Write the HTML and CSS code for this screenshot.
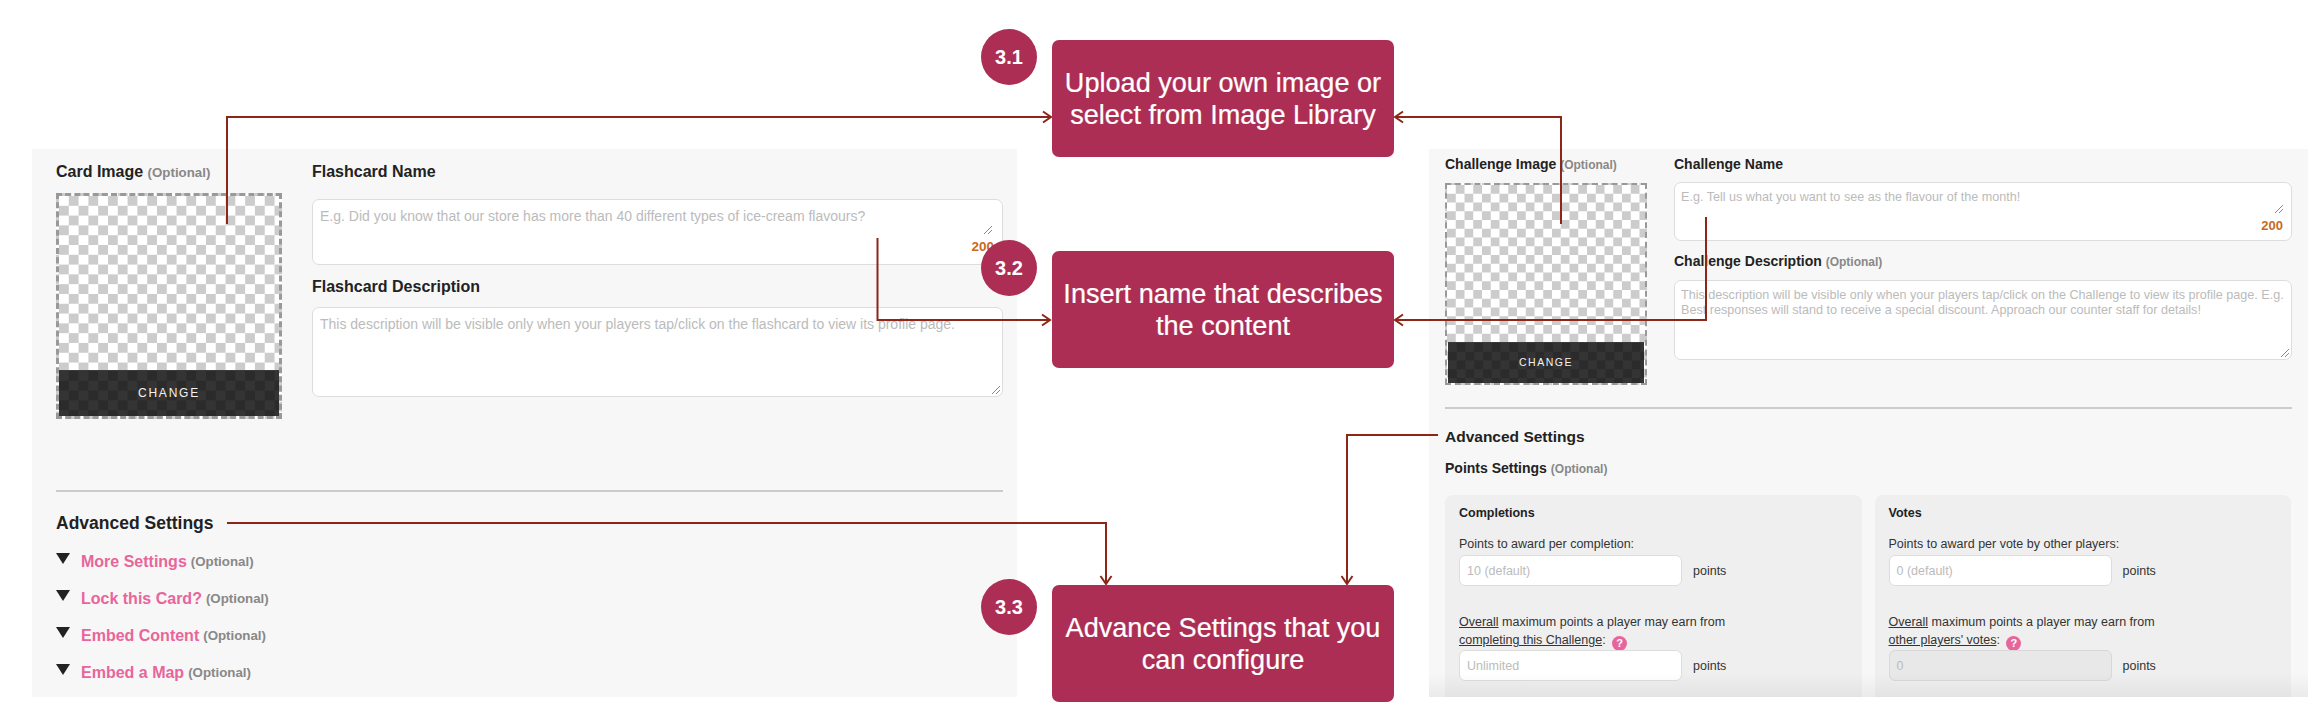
FILE: index.html
```html
<!DOCTYPE html>
<html lang="en">
<head>
<meta charset="utf-8">
<title>Card and Challenge settings guide</title>
<link rel="stylesheet" href="styles.css">
</head>
<body>
<div class="page">
  <section class="panel panel-card">
    <div class="top-row">
      <div class="image-col">
        <div class="label">Card Image <span class="opt">(Optional)</span></div>
        <div class="image-box"><div class="change">CHANGE</div></div>
      </div>
      <div class="fields">
        <div class="label">Flashcard Name</div>
        <div class="box box-name">
          <div class="ph">E.g. Did you know that our store has more than 40 different types of ice-cream flavours?</div>
          <svg class="grip grip-name" width="10" height="10" viewBox="0 0 10 10"><path d="M1 9 9 1M5 9 9 5"/></svg>
          <div class="count">200</div>
        </div>
        <div class="label label-desc">Flashcard Description</div>
        <div class="box box-desc">
          <div class="ph">This description will be visible only when your players tap/click on the flashcard to view its profile page.</div>
          <svg class="grip grip-end" width="10" height="10" viewBox="0 0 10 10"><path d="M1 9 9 1M5 9 9 5"/></svg>
        </div>
      </div>
    </div>
    <hr class="rule">
    <div class="adv">Advanced Settings</div>
    <div class="acc">
      <div class="acc-row"><i class="tri"></i><a class="link">More Settings</a> <span class="opt">(Optional)</span></div>
      <div class="acc-row"><i class="tri"></i><a class="link">Lock this Card?</a> <span class="opt">(Optional)</span></div>
      <div class="acc-row"><i class="tri"></i><a class="link">Embed Content</a> <span class="opt">(Optional)</span></div>
      <div class="acc-row"><i class="tri"></i><a class="link">Embed a Map</a> <span class="opt">(Optional)</span></div>
    </div>
  </section>

  <section class="panel panel-challenge">
    <div class="top-row">
      <div class="image-col">
        <div class="label">Challenge Image <span class="opt">(Optional)</span></div>
        <div class="image-box"><div class="change">CHANGE</div></div>
      </div>
      <div class="fields">
        <div class="label">Challenge Name</div>
        <div class="box box-name">
          <div class="ph">E.g. Tell us what you want to see as the flavour of the month!</div>
          <svg class="grip grip-name" width="10" height="10" viewBox="0 0 10 10"><path d="M1 9 9 1M5 9 9 5"/></svg>
          <div class="count">200</div>
        </div>
        <div class="label label-desc">Challenge Description <span class="opt">(Optional)</span></div>
        <div class="box box-desc">
          <div class="ph">This description will be visible only when your players tap/click on the Challenge to view its profile page. E.g. Best responses will stand to receive a special discount. Approach our counter staff for details!</div>
          <svg class="grip grip-end" width="10" height="10" viewBox="0 0 10 10"><path d="M1 9 9 1M5 9 9 5"/></svg>
        </div>
      </div>
    </div>
    <hr class="rule">
    <div class="adv">Advanced Settings</div>
    <div class="points-title">Points Settings <span class="opt">(Optional)</span></div>
    <div class="cards">
      <div class="card">
        <div class="card-title">Completions</div>
        <div class="text">Points to award per completion:</div>
        <div class="input-row"><div class="input">10 (default)</div><span class="unit">points</span></div>
        <div class="text text-max"><u>Overall</u> maximum points a player may earn from<br><u>completing this Challenge</u>: <span class="help">?</span></div>
        <div class="input-row"><div class="input">Unlimited</div><span class="unit">points</span></div>
      </div>
      <div class="card">
        <div class="card-title">Votes</div>
        <div class="text">Points to award per vote by other players:</div>
        <div class="input-row"><div class="input">0 (default)</div><span class="unit">points</span></div>
        <div class="text text-max"><u>Overall</u> maximum points a player may earn from<br><u>other players' votes</u>: <span class="help">?</span></div>
        <div class="input-row"><div class="input input-off">0</div><span class="unit">points</span></div>
      </div>
    </div>
  </section>

  <svg class="wires" width="2320" height="728" viewBox="0 0 2320 728">
    <path d="M227 224V117H1051M1043 111.500 1051 117 1043 122.500"/>
    <path d="M877.500 238V320H1050M1042 314.500 1050 320 1042 325.500"/>
    <path d="M1561 224V117H1395M1403 111.500 1395 117 1403 122.500"/>
    <path d="M1706 217V320H1395M1403 314.500 1395 320 1403 325.500"/>
    <path d="M227 523H1106V584M1100.500 576 1106 584 1111.500 576"/>
    <path d="M1438 435H1347V584M1341.500 576 1347 584 1352.500 576"/>
  </svg>

  <div class="badge badge-1">3.1</div>
  <div class="callout callout-1">Upload your own image or<br>select from Image Library</div>
  <div class="badge badge-2">3.2</div>
  <div class="callout callout-2">Insert name that describes<br>the content</div>
  <div class="badge badge-3">3.3</div>
  <div class="callout callout-3">Advance Settings that you<br>can configure</div>
</div>
</body>
</html>
```
FILE: styles.css
```css
* { box-sizing: border-box; }
html, body { margin: 0; background: #fff; }
body { font-family: "Liberation Sans", Arial, sans-serif; color: #222; }

.page {
  position: relative;
  width: 2320px;
  height: 728px;
  display: flex;
  gap: 412px;
  padding: 149px 12px 31px 32px;
  overflow: hidden;
}

.panel { position: relative; background: #f7f7f7; overflow: hidden; flex: none; height: 548px; }
.panel-card { width: 985px; padding: 13px 14px 0 24px; }
.panel-challenge { width: 879px; padding: 5px 16px 0 16px; }
.panel-challenge::after {
  content: "";
  position: absolute;
  left: 0; right: 0; bottom: 0;
  height: 24px;
  background: linear-gradient(rgba(0,0,0,0), rgba(0,0,0,.05));
}

.top-row { display: flex; align-items: flex-start; }
.panel-card .top-row { gap: 30px; }
.panel-challenge .top-row { gap: 27px; }
.panel-card .image-col { width: 226px; }
.panel-challenge .image-col { width: 202px; }
.fields { flex: 1; min-width: 0; }

.label { font-weight: 700; line-height: 20px; white-space: nowrap; }
.panel-card .label { font-size: 16px; }
.panel-challenge .label { font-size: 14px; }
.opt { font-weight: 700; color: #888; }
.panel-card .opt { font-size: 13.300px; }
.panel-challenge .opt { font-size: 12px; }

.image-box {
  display: flex;
  flex-direction: column;
  justify-content: flex-end;
  border-style: dashed;
  border-color: #999;
}
.panel-card .image-box {
  height: 226px;
  margin-top: 10px;
  border-width: 3px;
  background: repeating-conic-gradient(#ccc 0 25%, #fff 0 50%) 0 0 / 19.600px 19.600px;
}
.panel-challenge .image-box {
  height: 202px;
  margin-top: 8px;
  border-width: 2px;
  background: repeating-conic-gradient(#ccc 0 25%, #fff 0 50%) 0 0 / 17.500px 17.500px;
}
.change {
  display: flex;
  align-items: center;
  justify-content: center;
  color: #f2f2f2;
  font-size: 12px;
  letter-spacing: 1.800px;
  border-top: 1px solid #3a3a3a;
}
.panel-card .change {
  height: 46px;
  padding-bottom: 2px;
  background: repeating-conic-gradient(#2b2b2b 0 25%, #343434 0 50%) 0 0 / 19.600px 19.600px;
}
.panel-challenge .change {
  height: 41px;
  margin: 0 1px 0;
  padding-bottom: 2px;
  font-size: 10.500px;
  letter-spacing: 1.500px;
  background: repeating-conic-gradient(#2b2b2b 0 25%, #343434 0 50%) 0 0 / 17.500px 17.500px;
}

.box {
  position: relative;
  display: flex;
  flex-direction: column;
  background: #fff;
  border: 1.500px solid #ddd;
  border-radius: 7px;
  color: #bbb;
}
.panel-card .box { padding: 7px 8px 9px 7px; font-size: 14px; line-height: 18px; }
.panel-challenge .box { padding: 7px 6px 6px 6px; font-size: 12.600px; line-height: 15px; }
.panel-card .box-name { height: 66px; margin-top: 17px; }
.panel-card .box-desc { height: 90px; margin-top: 10px; }
.panel-challenge .box-name { height: 59px; margin-top: 8px; }
.panel-challenge .box-desc { height: 80px; margin-top: 8px; }
.panel-card .label-desc { margin-top: 12px; }
.panel-challenge .label-desc { margin-top: 10px; }

.count { margin-top: auto; text-align: right; font-weight: 700; color: #c96a1f; }
.panel-card .count { font-size: 13.500px; line-height: 16px; }
.panel-challenge .count { font-size: 13px; line-height: 16px; padding-right: 2px; }

.grip { position: absolute; fill: none; stroke: #888; stroke-width: 1; }
.grip-end { right: 1px; bottom: 1px; }
.panel-card .grip-name { right: 9px; top: 25px; }
.panel-challenge .grip-name { right: 7px; top: 21px; }

.rule { height: 2px; margin: 0; border: 0; background: #ccc; }
.panel-card .rule { margin-top: 71px; }
.panel-challenge .rule { margin-top: 22px; }

.adv { font-weight: 700; line-height: 20px; }
.panel-card .adv { font-size: 17.500px; margin-top: 21px; }
.panel-challenge .adv { font-size: 15.500px; margin-top: 18px; }

.acc { margin-top: 10px; }
.acc-row { display: flex; align-items: center; gap: 4px; height: 37px; font-size: 16px; white-space: pre; }
.tri {
  width: 0; height: 0;
  margin: -7px 7px 0 0;
  border-left: 7.500px solid transparent;
  border-right: 7.500px solid transparent;
  border-top: 11px solid #222;
}
.link { color: #e8659b; font-weight: 700; }

.points-title { font-size: 14px; font-weight: 700; line-height: 20px; margin-top: 11px; }
.cards { display: flex; gap: 13px; margin-top: 16px; padding-right: 1px; }
.card { flex: 1; height: 260px; padding: 9px 14px; background: #efefef; border-radius: 8px; font-size: 12.500px; }
.card-title { font-size: 12.500px; font-weight: 700; line-height: 18px; }
.text { line-height: 18px; margin-top: 13px; color: #333; }
.text-max { margin-top: 27px; }
.input-row { display: flex; align-items: center; gap: 11px; margin-top: 2px; }
.text-max + .input-row { margin-top: 1px; }
.input {
  width: 223px;
  height: 31px;
  padding: 0 7px;
  display: flex;
  align-items: center;
  background: #fff;
  border: 1.500px solid #ddd;
  border-radius: 6px;
  color: #bbb;
}
.input-off { background: #e8e8e8; border-color: #d8d8d8; }
.unit { color: #333; }
.help {
  display: inline-block;
  width: 15px;
  height: 15px;
  margin: -2px 0 -2px 3px;
  border-radius: 50%;
  background: #e8659b;
  color: #fff;
  text-align: center;
  font-size: 11px;
  font-weight: 700;
  line-height: 15px;
  vertical-align: -3px;
}

.wires { position: absolute; left: 0; top: 0; fill: none; stroke: #8c2618; stroke-width: 2; }

.callout {
  position: absolute;
  left: 1052px;
  width: 342px;
  height: 117px;
  display: flex;
  align-items: center;
  justify-content: center;
  text-align: center;
  background: #ad2e54;
  border-radius: 7px;
  color: #fff;
  font-size: 27.100px;
  line-height: 32px;
  -webkit-text-stroke: .2px #fff;
}
.callout-1 { top: 40px; }
.callout-2 { top: 251px; }
.callout-3 { top: 585px; }

.badge {
  position: absolute;
  left: 981px;
  width: 56px;
  height: 56px;
  display: flex;
  align-items: center;
  justify-content: center;
  border-radius: 50%;
  background: #ad2e54;
  color: #fff;
  font-size: 20px;
  font-weight: 700;
}
.badge-1 { top: 29px; }
.badge-2 { top: 240px; }
.badge-3 { top: 579px; }
```
